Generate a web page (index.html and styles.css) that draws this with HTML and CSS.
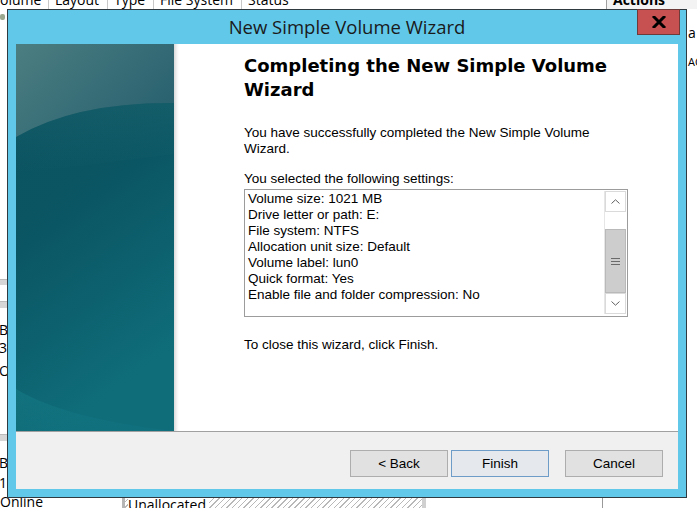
FILE: index.html
```html
<!DOCTYPE html>
<html>
<head>
<meta charset="utf-8">
<link rel="stylesheet" href="styles.css">
</head>
<body>
<div class="desktop">
  <div class="headers">
    <div class="hcell h-vol">olume</div>
    <div class="hcell h-lay">Layout</div>
    <div class="hcell h-type">Type</div>
    <div class="hcell h-fs">File System</div>
    <div class="hcell h-st">Status</div>
    <div class="hcell h-gap"></div>
    <div class="hcell h-act">Actions</div>
  </div>
  <div class="leftbits">
    <div class="ico"></div>
    <div class="band b1"></div>
    <div class="band b2"></div>
    <div class="lt t1">B</div>
    <div class="lt t2">3</div>
    <div class="lt t3">O</div>
    <div class="band b3"></div>
    <div class="lt t4">B</div>
    <div class="lt t5">1</div>
  </div>
  <div class="rightbits">
    <div class="rt r1">a</div>
    <div class="rt r2">AC</div>
  </div>
  <div class="bottomrow">
    <div class="online">Online</div>
    <div class="unalloc"><span>Unallocated</span></div>
    <div class="bseg"></div>
  </div>
</div>

<div class="dialog">
  <div class="titlebar">New Simple Volume Wizard</div>
  <div class="closebtn">
    <svg width="14" height="12" viewBox="0 0 14 12"><path d="M2 1 L12 11 M12 1 L2 11" stroke="#000" stroke-width="3" fill="none" stroke-linecap="square"/></svg>
  </div>
  <div class="client">
    <div class="main">
      <div class="side">
        <svg width="158" height="387" viewBox="0 0 158 387">
          <defs>
            <linearGradient id="base" x1="0" y1="0" x2="0.3" y2="1">
              <stop offset="0" stop-color="#0a4f5c"/>
              <stop offset="0.5" stop-color="#0b5664"/>
              <stop offset="1" stop-color="#0f6d7a"/>
            </linearGradient>
            <linearGradient id="cap" x1="0" y1="0" x2="1" y2="0.6">
              <stop offset="0" stop-color="#4b7e81"/>
              <stop offset="1" stop-color="#2a6270"/>
            </linearGradient>
            <linearGradient id="glow" x1="0" y1="0" x2="0.5" y2="1">
              <stop offset="0" stop-color="#1a8a93" stop-opacity="0.35"/>
              <stop offset="1" stop-color="#1a8a93" stop-opacity="0.1"/>
            </linearGradient>
            <linearGradient id="under" x1="0" y1="0" x2="0" y2="1">
              <stop offset="0" stop-color="#1d6670" stop-opacity="0.45"/>
              <stop offset="1" stop-color="#1d6670" stop-opacity="0"/>
            </linearGradient>
          </defs>
          <rect width="158" height="387" fill="url(#base)"/>
          <path d="M0 93 Q60 58 158 59 L158 110 L0 130 Z" fill="url(#under)"/>
          <path d="M0 345 Q50 375 158 387 L0 387 Z" fill="url(#glow)"/>
          <path d="M0 0 H158 V59 Q60 58 0 93 Z" fill="url(#cap)"/>
        </svg>
      </div>
      <div class="shadow"></div>
      <div class="page">
        <h1 class="heading">Completing the New Simple Volume Wizard</h1>
        <p class="para p1">You have successfully completed the New Simple Volume Wizard.</p>
        <p class="para p2">You selected the following settings:</p>
        <div class="listbox">
          <div class="lines">
            <div>Volume size: 1021 MB</div>
            <div>Drive letter or path: E:</div>
            <div>File system: NTFS</div>
            <div>Allocation unit size: Default</div>
            <div>Volume label: lun0</div>
            <div>Quick format: Yes</div>
            <div>Enable file and folder compression: No</div>
          </div>
          <div class="vscroll">
            <div class="arrow up"><svg width="9" height="5" viewBox="0 0 9 5"><path d="M0.5 4.5 L4.5 0.8 L8.5 4.5" stroke="#606060" fill="none" stroke-width="1"/></svg></div>
            <div class="track-top"></div>
            <div class="thumb">
              <div class="grip"></div><div class="grip"></div><div class="grip"></div>
            </div>
            <div class="arrow down"><svg width="9" height="5" viewBox="0 0 9 5"><path d="M0.5 0.5 L4.5 4.2 L8.5 0.5" stroke="#606060" fill="none" stroke-width="1"/></svg></div>
          </div>
        </div>
        <p class="para p3">To close this wizard, click Finish.</p>
      </div>
    </div>
    <div class="footer">
      <button class="btn back">&lt; Back</button>
      <button class="btn finish">Finish</button>
      <button class="btn cancel">Cancel</button>
    </div>
  </div>
</div>
</body>
</html>
```

FILE: styles.css
```css
html, body {
  margin: 0;
  padding: 0;
}
body {
  width: 697px;
  height: 508px;
  overflow: hidden;
  position: relative;
  background: #ffffff;
  font-family: "Liberation Sans", Arial, sans-serif;
}

/* ---------- background window ---------- */
.desktop {
  position: absolute;
  left: 0;
  top: 0;
  width: 697px;
  height: 508px;
}
.headers {
  display: flex;
  height: 9px;
  overflow: hidden;
  font-family: "Open Sans", "Noto Sans", sans-serif;
  font-size: 14px;
  color: #000;
  background: #fff;
}
.hcell {
  line-height: 9px;
  height: 9px;
  margin-top: -5px;
  padding-bottom: 5px;
  border-right: 1px solid #c8c8c8;
  padding-left: 6px;
  padding-right: 6px;
  white-space: nowrap;
}
.h-vol { padding-left: 0; width: 42px; }
.h-lay { width: 46px; }
.h-type { width: 33px; }
.h-fs { width: 75px; }
.h-st { width: 40px; border-right: none; }
.h-gap { flex: 1; border-right: 1px solid #a0a0a0; }
.h-act { font-weight: bold; width: 78px; border-right: none; background: #f3f3f3; }

.leftbits {
  position: absolute;
  left: 0;
  top: 0;
  width: 8px;
  height: 508px;
  overflow: hidden;
}
.ico {
  position: absolute;
  left: 0;
  top: 14px;
  width: 5px;
  height: 6px;
  background: #9aa890;
  border-radius: 2px;
}
.band {
  position: absolute;
  left: 0;
  width: 8px;
  background: #d6d6d6;
}
.b1 { top: 279px; height: 5px; border-top: 1px solid #bbb; }
.b2 { top: 301px; height: 6px; border-top: 1px solid #bbb; }
.b3 { top: 434px; height: 6px; border-top: 1px solid #bbb; }
.lt {
  position: absolute;
  left: -1px;
  font-family: "Open Sans", "Noto Sans", sans-serif;
  font-size: 14px;
  line-height: 18px;
  color: #000;
}
.t1 { top: 321px; }
.t2 { top: 339px; }
.t3 { top: 362px; }
.t4 { top: 454px; }
.t5 { top: 474px; }

.rightbits {
  position: absolute;
  left: 687px;
  top: 9px;
  width: 10px;
  height: 100px;
  overflow: hidden;
}
.rt {
  position: absolute;
  left: 1px;
  font-family: "Open Sans", "Noto Sans", sans-serif;
  font-size: 14px;
  line-height: 18px;
}
.r1 { top: 15px; }
.r2 { top: 44px; font-size: 11px; }

.bottomrow {
  position: absolute;
  left: 0;
  top: 497px;
  width: 697px;
  height: 11px;
  display: flex;
  overflow: hidden;
  font-family: "Open Sans", "Noto Sans", sans-serif;
  font-size: 14px;
  line-height: 16px;
}
.online {
  width: 122px;
  margin-top: -3px;
}
.unalloc {
  width: 294px;
  border-left: 3px solid #b5b5b5;
  padding-left: 3px;
  background: repeating-linear-gradient(135deg, #ffffff 0px, #ffffff 3px, #b8b8b8 3px, #b8b8b8 4px);
}
.unalloc span {
  background: #fff;
  display: inline-block;
  margin-top: -3px;
  padding-right: 3px;
}
.bseg {
  width: 176px;
  border-left: 4px solid #d0d0d0;
  border-right: 1px solid #999;
}

/* ---------- dialog ---------- */
.dialog {
  position: absolute;
  left: 7px;
  top: 9px;
  width: 662px;
  height: 479px;
  border: 1px solid #2e3a40;
  background: #61c8ea;
  display: flex;
  flex-direction: column;
  padding: 0 8px 8px 8px;
}
.titlebar {
  height: 34px;
  line-height: 34px;
  text-align: center;
  font-family: "Open Sans", "Noto Sans", sans-serif;
  font-size: 18.5px;
  color: #1a1a1a;
}
.closebtn {
  position: absolute;
  right: 6px;
  top: -1px;
  width: 41px;
  height: 24px;
  background: #c75050;
  border: 1px solid #6e3b3b;
  display: flex;
  align-items: center;
  justify-content: center;
}
.client {
  flex: 1;
  display: flex;
  flex-direction: column;
  background: #fff;
}
.main {
  height: 387px;
  display: flex;
  border-bottom: 1px solid #a0a0a0;
}
.side {
  width: 158px;
  height: 387px;
}
.side svg { display: block; }
.shadow {
  width: 5px;
  background: linear-gradient(90deg, #d9d9d9, #f4f4f4 60%, #ffffff);
}
.page {
  flex: 1;
  padding: 10px 0 0 65px;
}
.heading {
  margin: 0;
  font-family: "DejaVu Sans", Verdana, sans-serif;
  font-weight: bold;
  font-size: 18px;
  line-height: 24px;
  width: 400px;
  color: #000;
}
.para {
  margin: 0;
  font-size: 13.5px;
  line-height: 16px;
  color: #000;
}
.p1 { margin-top: 23px; width: 370px; }
.p2 { margin-top: 14px; }
.p3 { margin-top: 20px; }
.listbox {
  margin-top: 2px;
  width: 382px;
  height: 126px;
  border: 1px solid #9c9c9c;
  display: flex;
  font-size: 13.5px;
  line-height: 16px;
}
.lines {
  flex: 1;
  padding: 1px 0 0 3px;
}
.vscroll {
  width: 21px;
  margin: 1px 1px 2px 0;
  display: flex;
  flex-direction: column;
  border-left: 1px solid #e6e6e6;
}
.arrow {
  height: 19px;
  border: 1px solid #dadada;
  display: flex;
  align-items: center;
  justify-content: center;
  background: #fff;
}
.track-top {
  height: 17px;
}
.thumb {
  flex: 1;
  background: #cdcdcd;
  border: 1px solid #b9b9b9;
  display: flex;
  flex-direction: column;
  align-items: center;
  justify-content: center;
  gap: 2px;
}
.grip {
  width: 9px;
  height: 1px;
  background: #6a6a6a;
}
.footer {
  flex: 1;
  background: #f0f0f0;
  display: flex;
  align-items: flex-start;
  padding: 18px 15px 0 0;
  justify-content: flex-end;
}
.btn {
  width: 98px;
  height: 27px;
  margin: 0;
  font-family: "Liberation Sans", Arial, sans-serif;
  font-size: 13.5px;
  color: #000;
  background: #e1e1e1;
  border: 1px solid #adadad;
  padding: 0;
}
.finish {
  margin-left: 3px;
  background: #e5e9ed;
  border-color: #6d9cc8;
}
.cancel {
  margin-left: 16px;
}
```
